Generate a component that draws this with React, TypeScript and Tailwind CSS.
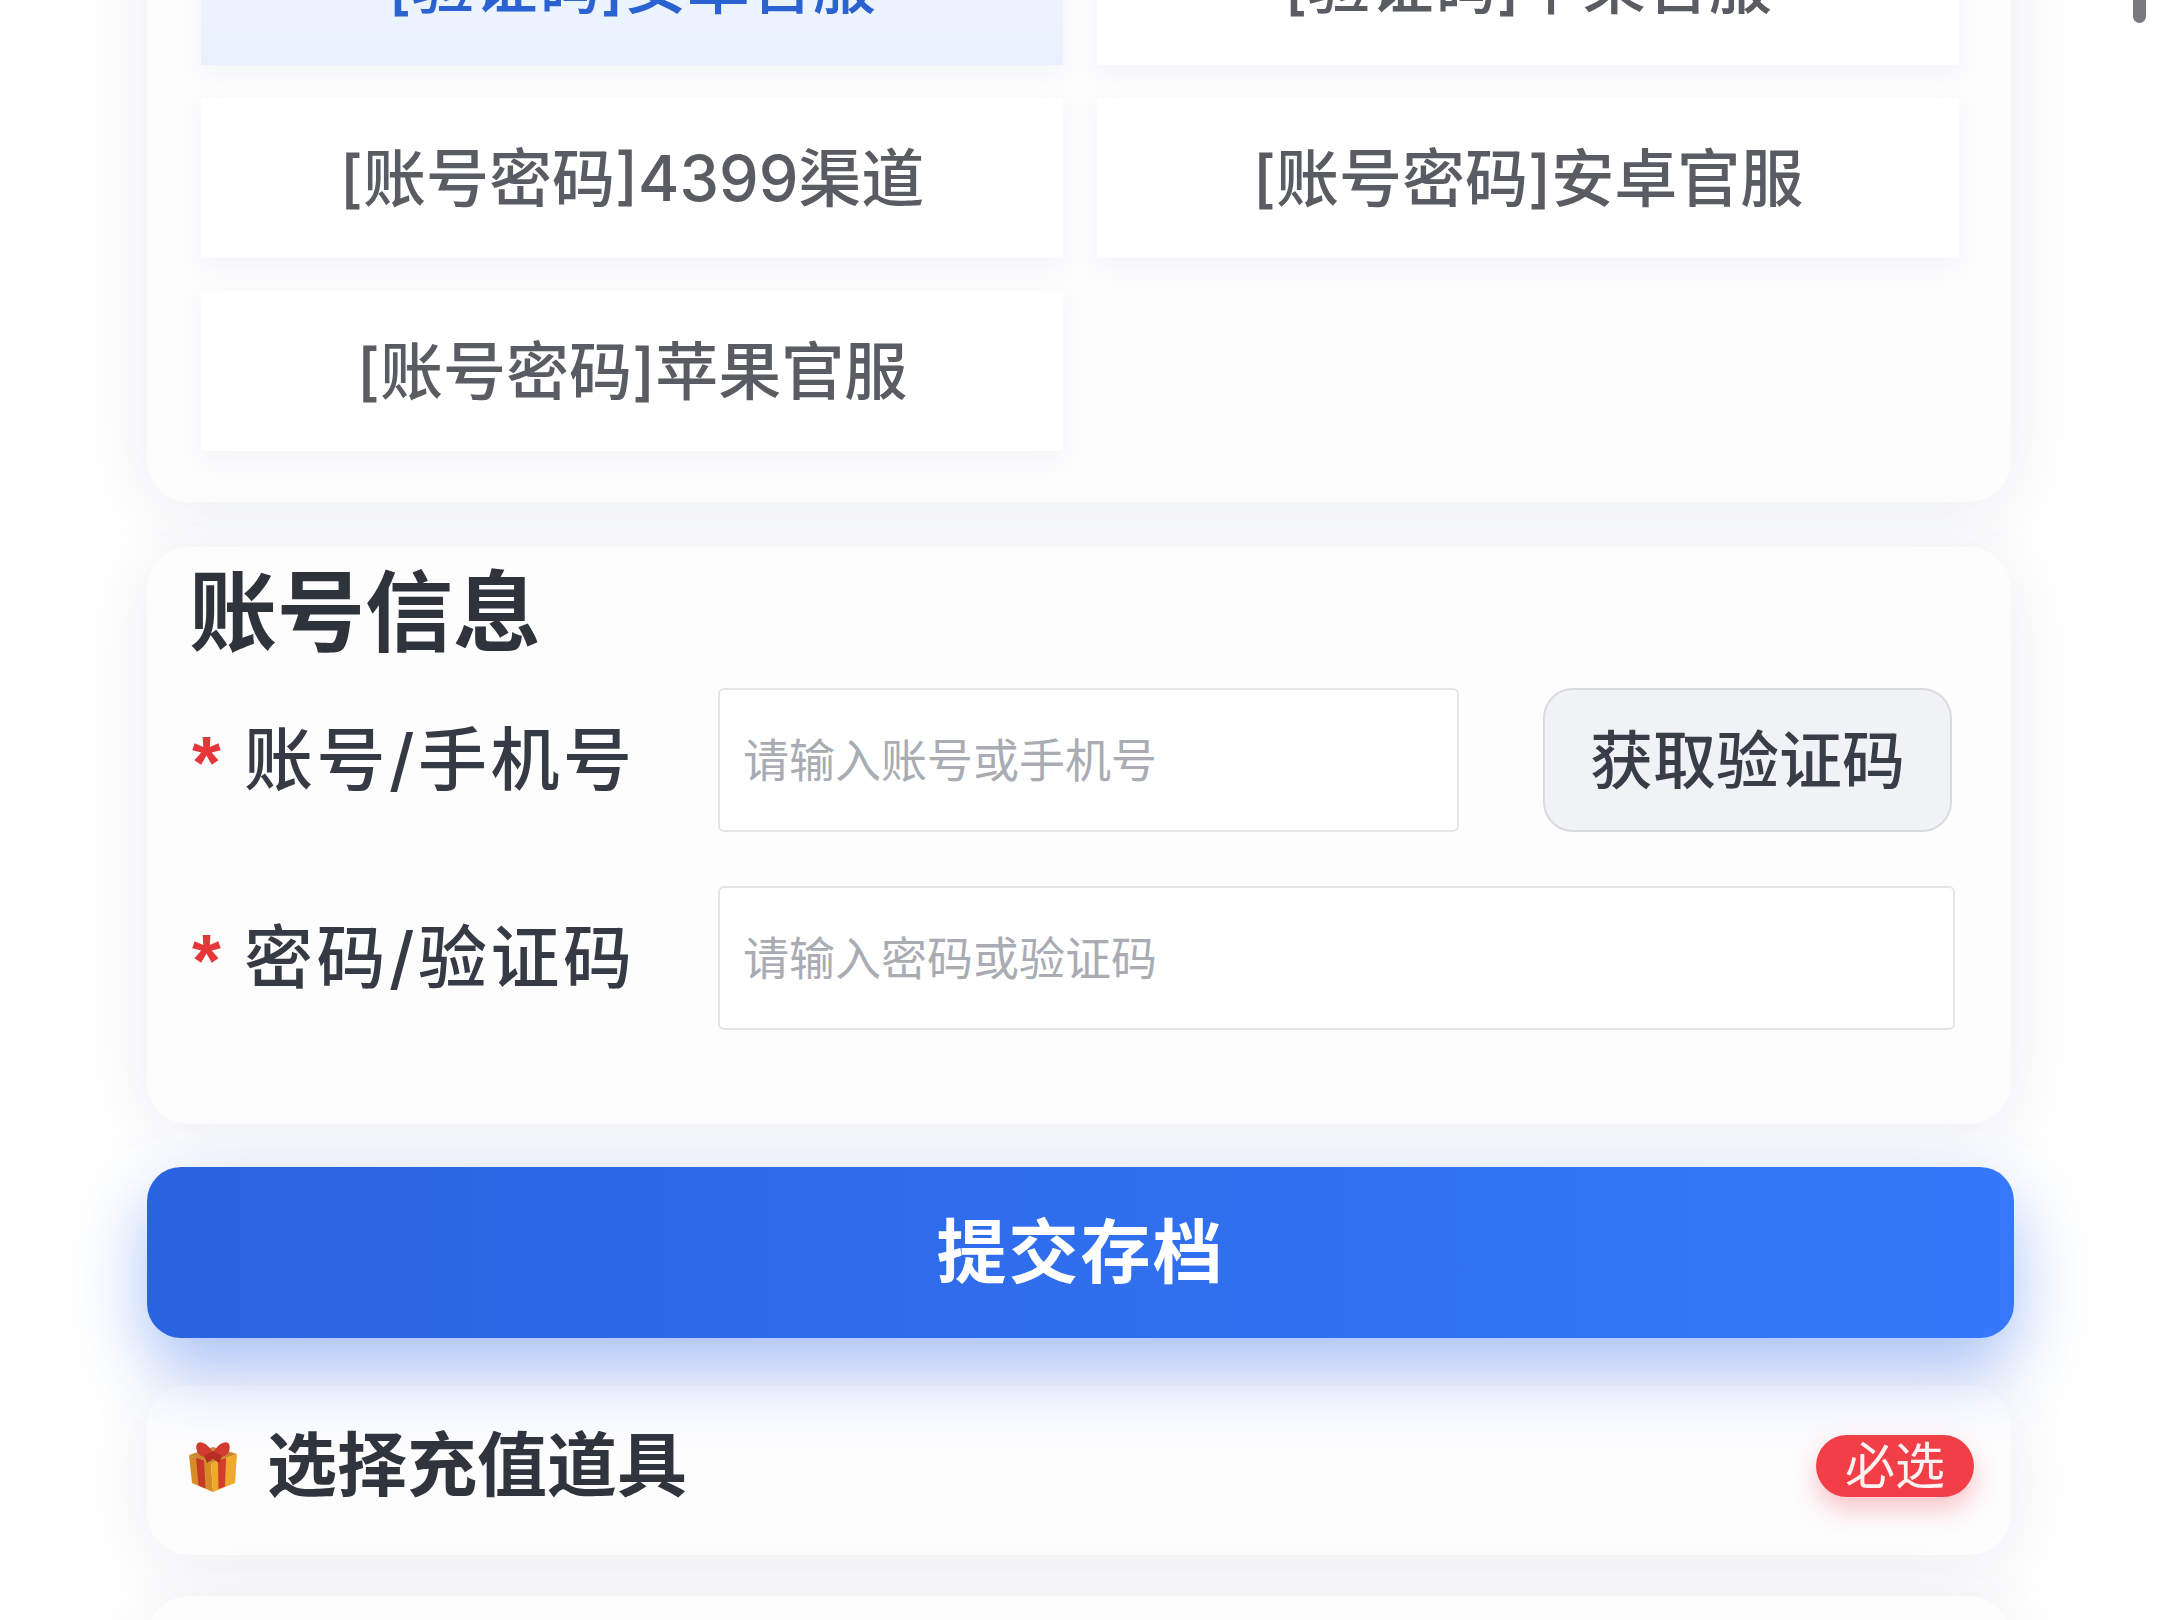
const TILES = [
  { label: '[验证码]安卓官服', active: true },
  { label: '[验证码]苹果官服', active: false },
  { label: '[账号密码]4399渠道', active: false },
  { label: '[账号密码]安卓官服', active: false },
  { label: '[账号密码]苹果官服', active: false },
]

const CARD = 'mx-[147px] w-[1864px] rounded-[42px] bg-[#fdfdfe] shadow-[0_10px_70px_rgba(60,70,110,0.09)]'

function GiftIcon() {
  return (
    <svg viewBox="0 0 54 54" className="h-[54px] w-[54px] shrink-0">
      <path d="M3 16 L25 24 L27 53 L6 44 Z" fill="#d68c26" />
      <path d="M25 24 L51 15 L49 44 L27 53 Z" fill="#efaa2c" />
      <path d="M3 16 L27 8 L51 15 L25 24 Z" fill="#c9862c" />
      <path d="M10 18.5 L18 21.5 L19.5 49.5 L12.5 46.5 Z" fill="#c8382a" />
      <path d="M32 21.5 L40 19 L39 47.5 L32.5 50 Z" fill="#d13c2b" />
      <path d="M27 14 C19 -1 7 1 11 12 C13 19 22 19 27 15 C32 19 41 19 43 12 C47 1 35 -1 27 14 Z" fill="#d33b30" />
      <path d="M18 17 L27 12 L36 17 L33 24 L27 20 L21 24 Z" fill="#b52c22" />
    </svg>
  )
}

function FormRow({ label, placeholder, withButton }: { label: string; placeholder: string; withButton?: boolean }) {
  return (
    <div className="flex h-[144px] items-center">
      <div className="flex w-[529px] shrink-0 items-center">
        <span className="h-[44px] w-[55px] pl-[3px] font-['Liberation_Sans',sans-serif] text-[74px] leading-[50px] font-bold text-[#e5363a]">*</span>
        <span className="text-[69px] leading-none font-medium tracking-[3.5px] whitespace-nowrap text-[#353a44]">{label}</span>
      </div>
      <input
        placeholder={placeholder}
        className="h-full min-w-0 flex-1 rounded-[6px] border-2 border-[#e4e5e9] bg-white px-[23px] text-[46px] outline-none placeholder:text-[#a9acb3]"
      />
      {withButton && (
        <button className="mr-[3px] ml-[84px] h-full w-[409px] shrink-0 rounded-[30px] border-2 border-[#d9dade] bg-[#f1f2f5] text-[63px] font-medium text-[#383d48]">
          获取验证码
        </button>
      )}
    </div>
  )
}

export default function App() {
  return (
    <div className="h-[1620px] overflow-hidden bg-white font-[Inter,'Noto_Sans_CJK_SC',sans-serif]">
      <div className="-mt-[140px]">
        <div className={`${CARD} grid grid-cols-2 gap-x-[34px] gap-y-[33px] pt-[45px] pr-[52px] pb-[51px] pl-[54px]`}>
          {TILES.map((tile) => (
            <div
              key={tile.label}
              className={
                tile.active
                  ? 'flex h-[160px] items-center justify-center bg-gradient-to-b from-[#f1f7ff] to-[#e8f2fe] text-[63px] font-medium text-[#2a62d2] shadow-[0_8px_24px_rgba(60,70,110,0.05)]'
                  : 'flex h-[160px] items-center justify-center bg-white text-[63px] font-medium text-[#5a5c63] shadow-[0_8px_24px_rgba(60,70,110,0.05)]'
              }
            >
              {tile.label}
            </div>
          ))}
        </div>

        <div className={`${CARD} mt-[45px] pr-[56px] pb-[94px] pl-[42px]`}>
          <h2 className="pt-[15px] pb-[26px] text-[88px] leading-[100px] font-bold text-[#2f333c]">账号信息</h2>
          <div className="flex flex-col gap-[54px]">
            <FormRow label="账号/手机号" placeholder="请输入账号或手机号" withButton />
            <FormRow label="密码/验证码" placeholder="请输入密码或验证码" />
          </div>
        </div>

        <button className="relative mx-[147px] mt-[43px] block h-[171px] w-[1867px] rounded-[34px] bg-gradient-to-r from-[#2a63e0] to-[#3579fa] text-[70px] font-bold tracking-[2px] text-white shadow-[0_30px_70px_rgba(45,105,235,0.42)]">
          提交存档
        </button>

        <div className={`${CARD} mt-[47px] flex h-[170px] items-center justify-between pr-[37px] pb-[8px] pl-[39px]`}>
          <div className="flex items-center gap-[27px]">
            <GiftIcon />
            <span className="text-[70px] leading-none font-bold text-[#30343d]">选择充值道具</span>
          </div>
          <span className="flex h-[62px] w-[158px] items-center justify-center rounded-full bg-[#f23f47] text-[50px] leading-none text-[#fff2f2] shadow-[0_12px_26px_rgba(242,63,71,0.3)]">
            必选
          </span>
        </div>

        <div className={`${CARD} mt-[41px] h-[200px]`} />
      </div>

      <div className="absolute top-0 left-[2133px] h-[23px] w-[13px] rounded-b-full bg-[#77797e]" />
    </div>
  )
}
